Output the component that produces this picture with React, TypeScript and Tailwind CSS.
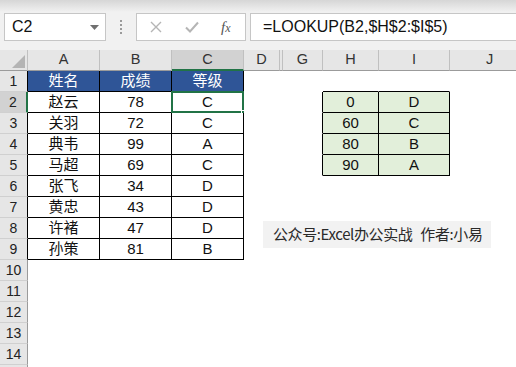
import React from "react";

type Col = { key: string; label: string; w: string };

const cols: Col[] = [
  { key: "A", label: "A", w: "w-[72px]" },
  { key: "B", label: "B", w: "w-[72px]" },
  { key: "C", label: "C", w: "w-[72px]" },
  { key: "D", label: "D", w: "w-[36px]" },
  { key: "EF", label: "", w: "w-[3px]" },
  { key: "G", label: "G", w: "w-[40px]" },
  { key: "H", label: "H", w: "w-[56px]" },
  { key: "I", label: "I", w: "w-[71px]" },
  { key: "J", label: "J", w: "w-[80px]" },
];

const scores: [string, string, string][] = [
  ["赵云", "78", "C"],
  ["关羽", "72", "C"],
  ["典韦", "99", "A"],
  ["马超", "69", "C"],
  ["张飞", "34", "D"],
  ["黄忠", "43", "D"],
  ["许褚", "47", "D"],
  ["孙策", "81", "B"],
];

const lookup: [string, string][] = [
  ["0", "D"],
  ["60", "C"],
  ["80", "B"],
  ["90", "A"],
];

const colIndex = (key: string) => cols.findIndex((c) => c.key === key);

function inTable(r: number, key: string) {
  if (["A", "B", "C"].includes(key) && r >= 1 && r <= 9) return true;
  if (["H", "I"].includes(key) && r >= 2 && r <= 5) return true;
  return false;
}

function cellValue(r: number, key: string): string {
  if (r === 1) {
    if (key === "A") return "姓名";
    if (key === "B") return "成绩";
    if (key === "C") return "等级";
  }
  if (r >= 2 && r <= 9) {
    const row = scores[r - 2];
    if (key === "A") return row[0];
    if (key === "B") return row[1];
    if (key === "C") return row[2];
  }
  if (r >= 2 && r <= 5) {
    const row = lookup[r - 2];
    if (key === "H") return row[0];
    if (key === "I") return row[1];
  }
  return "";
}

function Cell({ r, col }: { r: number; col: Col }) {
  const i = colIndex(col.key);
  const next = cols[i + 1];
  const right = inTable(r, col.key) || (next ? inTable(r, next.key) : false);
  const bottom = inTable(r, col.key) || inTable(r + 1, col.key);
  const header = r === 1 && inTable(r, col.key);
  const green = ["H", "I"].includes(col.key) && inTable(r, col.key);
  const selected = r === 2 && col.key === "C";

  return (
    <div
      className={`${col.w} relative flex h-full shrink-0 items-center justify-center border-r border-b ${
        right ? "border-r-black" : "border-r-transparent"
      } ${bottom ? "border-b-black" : "border-b-transparent"} ${
        header ? "bg-[#2f5597] text-white" : green ? "bg-[#e2efda] text-[#111]" : "bg-white text-[#111]"
      }`}
    >
      {cellValue(r, col.key)}
      {selected && (
        <>
          <div className="absolute -top-[1px] -left-[1px] -right-[1px] -bottom-[1px] border-2 border-[#217346]" />
          <div className="absolute -right-[3px] -bottom-[3px] h-[5px] w-[5px] border border-white bg-[#217346]" />
        </>
      )}
    </div>
  );
}

function Toolbar() {
  return (
    <div className="h-[50px] bg-[linear-gradient(#d6d6d6,#f1f1f1_12px,#f1f1f1)] pt-[13px]">
      <div className="flex h-[28px] items-stretch">
        {/* name box */}
        <div className="ml-[4px] flex w-[102px] items-center justify-between border border-[#c6c6c6] bg-white pl-[7px] pr-[6px]">
          <span className="text-[16px] text-[#111]">C2</span>
          <svg width="9" height="5" viewBox="0 0 9 5">
            <polygon points="0,0 9,0 4.5,5" fill="#6f6f6f" />
          </svg>
        </div>
        {/* separator dots */}
        <div className="flex w-[30px] flex-col items-center justify-center gap-[2px]">
          <span className="h-[2px] w-[2px] bg-[#9a9a9a]" />
          <span className="h-[2px] w-[2px] bg-[#9a9a9a]" />
          <span className="h-[2px] w-[2px] bg-[#9a9a9a]" />
          <span className="h-[2px] w-[2px] bg-[#9a9a9a]" />
        </div>
        {/* cancel / enter / fx */}
        <div className="flex w-[110px] items-center border border-[#c6c6c6] bg-white">
          <svg className="ml-[13px]" width="12" height="12" viewBox="0 0 12 12">
            <path d="M1 1 L11 11 M11 1 L1 11" stroke="#b5b5b5" strokeWidth="1.4" />
          </svg>
          <svg className="ml-[23px]" width="14" height="12" viewBox="0 0 14 12">
            <path d="M1 6.5 L5 10.5 L13 1.5" stroke="#b5b5b5" strokeWidth="2" fill="none" />
          </svg>
          <span className="ml-[22px] font-['Liberation_Serif',serif] text-[15px] italic text-[#555]">
            f<span className="text-[12px]">x</span>
          </span>
        </div>
        {/* formula input */}
        <div className="ml-[4px] flex flex-1 items-center border border-r-0 border-[#c6c6c6] bg-white pl-[12px] text-[16px] text-[#111]">
          =LOOKUP(B2,$H$2:$I$5)
        </div>
      </div>
    </div>
  );
}

export default function App() {
  const rows = Array.from({ length: 15 }, (_, i) => i + 1);

  return (
    <div className="h-[367px] w-[516px] overflow-hidden bg-white font-['Liberation_Sans','Noto_Sans_CJK_SC',sans-serif]">
      <Toolbar />

      <div className="relative">
        {/* column headers */}
        <div className="flex h-[21px] bg-[#e6e6e6] text-[14.5px] text-[#333]">
          <div className="flex w-[28px] shrink-0 items-end justify-end border-r border-b border-r-[#c0c0c0] border-b-[#9b9b9b] pr-[2px] pb-[2px]">
            <svg width="13" height="13" viewBox="0 0 13 13">
              <polygon points="13,0 13,13 0,13" fill="#b4b4b4" />
            </svg>
          </div>
          {cols.map((c) => (
            <div
              key={c.key}
              className={`${c.w} flex shrink-0 items-center justify-center border-r border-r-[#c0c0c0] ${
                c.key === "C" ? "border-b-2 border-b-[#217346] bg-[#d2d2d2]" : "border-b border-b-[#9b9b9b]"
              }`}
            >
              {c.label}
            </div>
          ))}
        </div>

        {/* body rows */}
        {rows.map((r) => (
          <div key={r} className="flex h-[21px] text-[15px]">
            <div
              className={`flex w-[28px] shrink-0 items-center justify-center border-b border-b-[#d0d0d0] text-[14px] text-[#222] ${
                r === 2
                  ? "border-r-2 border-r-[#217346] bg-[#d2d2d2]"
                  : inTable(r, "A")
                  ? "border-r border-r-black bg-[#e6e6e6]"
                  : "border-r border-r-[#9b9b9b] bg-[#e6e6e6]"
              }`}
            >
              {r <= 14 ? r : ""}
            </div>
            {cols.map((c) => (
              <Cell key={c.key} r={r} col={c} />
            ))}
          </div>
        ))}

        {/* floating text box */}
        <div className="absolute top-[171px] left-[263px] flex h-[27px] w-[228px] items-center whitespace-nowrap bg-[#f2f2f2] pl-[10px] font-['Noto_Sans_CJK_SC',sans-serif] text-[15px] tracking-[-0.4px] text-[#2a2a2a]">
          公众号:Excel办公实战<span className="w-[8px]" />作者:小易
        </div>
      </div>
    </div>
  );
}
